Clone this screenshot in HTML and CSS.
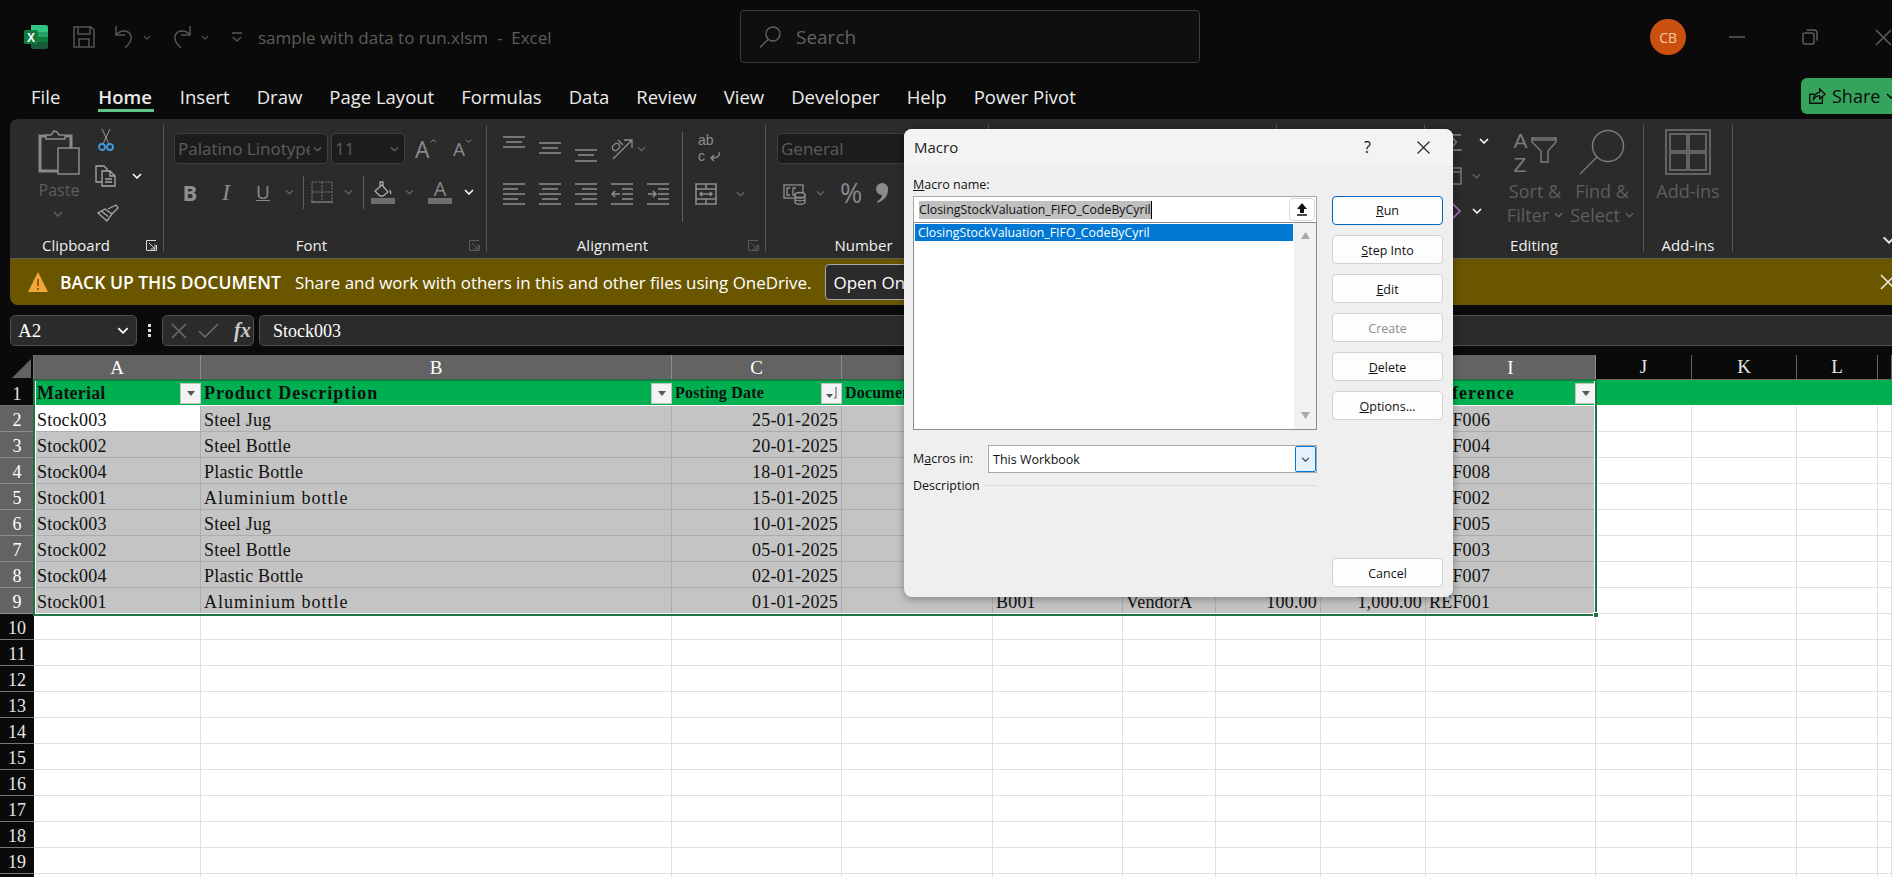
FILE: index.html
```html
<!DOCTYPE html>
<html lang="en">
<head>
    <meta charset="UTF-8">
    <title>sample with data to run.xlsm - Excel</title>
    <link rel="stylesheet" href="styles.css">
</head>
<body>
    <svg class="defs" width="0" height="0">
        <symbol id="chev" viewBox="0 0 10 6"><path d="M1 1l4 4 4-4" fill="none" stroke="currentColor" stroke-width="1.5"/></symbol>
        <symbol id="launcher" viewBox="0 0 11 11"><path d="M.5 10V.5H10M3 3l6 6M9 4.5V9H4.5M.5 10.5h10V5" fill="none" stroke="currentColor"/></symbol>
        <symbol id="tri" viewBox="0 0 8 5"><path d="M0 0h8L4 5z" fill="currentColor"/></symbol>
    </svg>

    <!-- title bar -->
    <header class="titlebar">
        <svg class="logo" width="24" height="24" viewBox="0 0 24 24">
            <path d="M7 0h15a2 2 0 0 1 2 2v5H7z" fill="#33c481"/>
            <path d="M7 7h17v5H7z" fill="#21a366"/>
            <path d="M7 12h17v5H7z" fill="#107c41"/>
            <path d="M7 17h17v5a2 2 0 0 1-2 2H9a2 2 0 0 1-2-2z" fill="#185c37"/>
            <rect x="0" y="5" width="14" height="14" rx="1.5" fill="#107c41"/>
            <text x="7" y="16.5" text-anchor="middle" font-family="Liberation Sans" font-weight="700" font-size="12" fill="#fff">X</text>
        </svg>
        <svg class="qat save" width="22" height="22" viewBox="0 0 22 22" fill="none" stroke="currentColor" stroke-width="1.5">
            <path d="M1 1h17l3 3v17H1zM5 1v7h12V1M6 21v-8h10v8"/>
        </svg>
        <svg class="qat undo" width="22" height="24" viewBox="0 0 22 24" fill="none" stroke="currentColor" stroke-width="1.5">
            <path d="M3 1v9h9M3 10c5-6 13-5 15 1 1 5-2 8-6 12"/>
        </svg>
        <svg class="qat chev-small" width="8" height="5"><use href="#chev"/></svg>
        <svg class="qat redo" width="22" height="24" viewBox="0 0 22 24" fill="none" stroke="currentColor" stroke-width="1.5">
            <path d="M19 1v9h-9M19 10c-5-6-13-5-15 1-1 5 2 8 6 12"/>
        </svg>
        <svg class="qat chev-small" width="8" height="5"><use href="#chev"/></svg>
        <svg class="qat customize" width="10" height="10" viewBox="0 0 10 10" fill="none" stroke="currentColor" stroke-width="1.4">
            <path d="M0 1h10M1 5l4 4 4-4"/>
        </svg>
        <div class="doc-title">sample with data to run.xlsm&nbsp; - &nbsp;Excel</div>
        <div class="search">
            <svg width="22" height="22" viewBox="0 0 22 22" fill="none" stroke="currentColor" stroke-width="1.4">
                <circle cx="14" cy="8" r="7"/><path d="M9 13.5L1 21.5"/>
            </svg>
            <span>Search</span>
        </div>
        <div class="avatar">CB</div>
        <svg class="win win-min" width="16" height="2"><path d="M0 1h16" stroke="currentColor" stroke-width="1.5"/></svg>
        <svg class="win win-max" width="16" height="16" viewBox="0 0 16 16" fill="none" stroke="currentColor" stroke-width="1.5">
            <rect x="1" y="4" width="11" height="11" rx="2"/><path d="M4.5 1H12a3 3 0 0 1 3 3v7.5"/>
        </svg>
        <svg class="win win-close" width="17" height="17" viewBox="0 0 17 17" stroke="currentColor" stroke-width="1.5"><path d="M1 1l15 15M16 1L1 16"/></svg>
    </header>

    <!-- tabs -->
    <nav class="tabs">
        <a class="tab tab-file">File</a>
        <a class="tab tab-active">Home</a>
        <a class="tab">Insert</a>
        <a class="tab">Draw</a>
        <a class="tab">Page Layout</a>
        <a class="tab">Formulas</a>
        <a class="tab">Data</a>
        <a class="tab">Review</a>
        <a class="tab">View</a>
        <a class="tab">Developer</a>
        <a class="tab">Help</a>
        <a class="tab">Power Pivot</a>
        <button class="share">
            <svg width="18" height="18" viewBox="0 0 20 20" fill="none" stroke="currentColor" stroke-width="1.5">
                <path d="M16 11v7H2V8h5M6 14c0-5 4-8 7-8V2l6 6-6 5V9.5c-3 0-5 1.5-7 4.5z"/>
            </svg>
            <span>Share</span>
            <svg width="10" height="6"><use href="#chev"/></svg>
        </button>
    </nav>

    <!-- ribbon -->
    <section class="ribbon-wrap">
        <div class="ribbon">
            <div class="group group-clipboard">
                <div class="group-body clip-body">
                    <div class="paste">
                        <svg width="42" height="45" viewBox="0 0 42 45" fill="none" stroke="#8a8a8a">
                            <path d="M10 6H2v35h20" stroke-width="3"/>
                            <path d="M8 9V5h5l3-4 3 1 2 3h6v4z" stroke-width="1.5" fill="#2b2b2b"/>
                            <path d="M28 6h5v12" stroke-width="3"/>
                            <rect x="20" y="18" width="21" height="26" stroke-width="1.5" fill="#2b2b2b"/>
                        </svg>
                        <span class="dim-label">Paste</span>
                        <svg class="chev" width="10" height="6"><use href="#chev"/></svg>
                    </div>
                    <div class="clip-tools">
                        <svg width="16" height="22" viewBox="0 0 16 22" fill="none">
                            <path d="M4 0l7 15M12 0L5 15" stroke="#9a9a9a"/>
                            <circle cx="4" cy="18" r="3" stroke="#3f9ade" stroke-width="1.8"/><circle cx="12" cy="18" r="3" stroke="#3f9ade" stroke-width="1.8"/>
                        </svg>
                        <div class="copy-row">
                            <svg width="22" height="22" viewBox="0 0 22 22" fill="none" stroke="#a8a8a8" stroke-width="1.3">
                                <path d="M7 17H1V1h8l3 3v2M7 6h8l5 5v10H7zM15 6v5h5M10 14h7M10 17h7"/>
                            </svg>
                            <svg class="chev-on" width="10" height="6"><use href="#chev"/></svg>
                        </div>
                        <svg class="brush" width="22" height="19" viewBox="0 0 22 19" fill="none" stroke="#a8a8a8" stroke-width="1.3">
                            <path d="M1 10l9 8 5-7-7-5zM5 8.5l6 5M15 11l6-6-2-3-8 4"/>
                        </svg>
                    </div>
                </div>
                <div class="group-label"><span>Clipboard</span><svg class="launcher-on" width="11" height="11"><use href="#launcher"/></svg></div>
            </div>

            <div class="group group-font">
                <div class="group-body font-body">
                    <div class="font-row">
                        <div class="combo combo-name"><span class="combo-text">Palatino Linotype</span><svg class="chev" width="9" height="6"><use href="#chev"/></svg></div>
                        <div class="combo combo-size"><span class="combo-text">11</span><svg class="chev" width="9" height="6"><use href="#chev"/></svg></div>
                        <span class="grow-a">A<svg width="7" height="4"><use href="#chev" transform="matrix(1 0 0 -1 0 4)"/></svg></span>
                        <span class="grow-a small-a">A<svg width="7" height="4"><use href="#chev"/></svg></span>
                    </div>
                    <div class="format-row">
                        <b class="fmt fmt-b">B</b>
                        <i class="fmt fmt-i">I</i>
                        <u class="fmt fmt-u">U</u>
                        <svg class="chev" width="9" height="6"><use href="#chev"/></svg>
                        <span class="vsep"></span>
                        <svg width="22" height="22" viewBox="0 0 22 22" fill="none" stroke="#7d7d7d">
                            <path d="M1 20V1h20v19M1 11h20M11 1v19" stroke-dasharray="2 1.2"/><path d="M0 21h22" stroke-width="1.5"/>
                        </svg>
                        <svg class="chev" width="9" height="6"><use href="#chev"/></svg>
                        <span class="vsep"></span>
                        <svg width="24" height="23" viewBox="0 0 24 23" fill="none" stroke="#a8a8a8" stroke-width="1.3">
                            <path d="M4 10l7-6 6 7-5 4h-3zM9 6V1h3v5M19 9l1 4"/><rect x="0" y="17" width="24" height="6" fill="#6e6e6e" stroke="none"/>
                        </svg>
                        <svg class="chev" width="9" height="6"><use href="#chev"/></svg>
                        <span class="font-color"><span>A</span></span>
                        <svg class="chev-on" width="10" height="6"><use href="#chev"/></svg>
                    </div>
                </div>
                <div class="group-label"><span>Font</span><svg class="launcher" width="11" height="11"><use href="#launcher"/></svg></div>
            </div>

            <div class="group group-align">
                <div class="group-body align-body">
                    <div class="align-grid">
                        <svg width="22" height="26" viewBox="0 0 22 26" stroke="#8e8e8e" stroke-width="1.5"><path d="M0 1h22M3 6h16M0 11h22"/></svg>
                        <svg width="22" height="26" viewBox="0 0 22 26" stroke="#8e8e8e" stroke-width="1.5"><path d="M0 7h22M3 12h16M0 17h22"/></svg>
                        <svg width="22" height="26" viewBox="0 0 22 26" stroke="#8e8e8e" stroke-width="1.5"><path d="M0 14h22M3 19h16M0 25h22"/></svg>
                        <svg width="24" height="24" viewBox="0 0 24 24" fill="none" stroke="#8e8e8e" stroke-width="1.3"><path d="M3 22L22 3M14 3h8v8M4 8a3 3 0 1 0 4 4 3 3 0 1 0-4-4zM8 3l5 5"/></svg>
                        <svg class="chev" width="9" height="6"><use href="#chev"/></svg>
                        <svg width="22" height="22" viewBox="0 0 22 22" stroke="#8e8e8e" stroke-width="1.5"><path d="M0 1h22M0 6h15M0 11h22M0 16h15M0 21h22"/></svg>
                        <svg width="22" height="22" viewBox="0 0 22 22" stroke="#8e8e8e" stroke-width="1.5"><path d="M0 1h22M3 6h16M0 11h22M3 16h16M0 21h22"/></svg>
                        <svg width="22" height="22" viewBox="0 0 22 22" stroke="#8e8e8e" stroke-width="1.5"><path d="M0 1h22M7 6h15M0 11h22M7 16h15M0 21h22"/></svg>
                        <svg width="22" height="22" viewBox="0 0 22 22" fill="none" stroke="#8e8e8e" stroke-width="1.5"><path d="M0 1h22M11 6h11M11 11h11M11 16h11M0 21h22M9 11H1M4 8l-3 3 3 3"/></svg>
                        <svg width="22" height="22" viewBox="0 0 22 22" fill="none" stroke="#8e8e8e" stroke-width="1.5"><path d="M0 1h22M11 6h11M11 11h11M11 16h11M0 21h22M1 11h8M6 8l3 3-3 3"/></svg>
                    </div>
                    <span class="vsep vsep-tall"></span>
                    <div class="align-side">
                        <div class="wrap-text"><span>ab</span><span>c</span><svg width="11" height="10" viewBox="0 0 11 10" fill="none" stroke="#8e8e8e" stroke-width="1.3"><path d="M10 0c1 4-1 6-8 6M5 3L2 6l3 3"/></svg></div>
                        <div class="merge-row">
                            <svg width="22" height="22" viewBox="0 0 22 22" fill="none" stroke="#8e8e8e" stroke-width="1.5"><rect x="1" y="1" width="20" height="20"/><path d="M1 6h20M1 16h20M5 11h12M7 9l-2 2 2 2M15 9l2 2-2 2M11 1v5M11 16v5"/></svg>
                            <svg class="chev" width="9" height="6"><use href="#chev"/></svg>
                        </div>
                    </div>
                </div>
                <div class="group-label"><span>Alignment</span><svg class="launcher" width="11" height="11"><use href="#launcher"/></svg></div>
            </div>

            <div class="group group-number">
                <div class="group-body number-body">
                    <div class="combo combo-number"><span class="combo-text">General</span></div>
                    <div class="number-row">
                        <svg width="23" height="23" viewBox="0 0 23 23" fill="none" stroke="#8e8e8e" stroke-width="1.3"><rect x="1" y="3" width="19" height="13"/><path d="M7 6H4v7h3M13 6h-3v7h3"/><ellipse cx="17" cy="13" rx="5" ry="2.5" fill="#2b2b2b"/><path d="M12 13v7c0 3 10 3 10 0v-7M12 17c0 2.5 10 2.5 10 0"/></svg>
                        <svg class="chev" width="9" height="6"><use href="#chev"/></svg>
                        <span class="percent">%</span>
                        <svg class="comma" width="12" height="20" viewBox="0 0 12 20"><path d="M6 0a6 6 0 0 1 6 7c0 6-4 10-10 13l-1-1.5c3-2 5-4 5-6.500A6 6 0 0 1 6 0z" fill="#8a8a8a"/></svg>
                    </div>
                </div>
                <div class="group-label"><span>Number</span><svg class="launcher" width="11" height="11"><use href="#launcher"/></svg></div>
            </div>

            <div class="group group-styles"></div>
            <div class="group group-cells"></div>

            <div class="group group-editing">
                <div class="group-body editing-body">
                    <div class="edit-tools">
                        <div class="edit-row edit-sum"><span class="sigma">Σ</span><svg class="chev-on" width="10" height="6"><use href="#chev"/></svg></div>
                        <div class="edit-row"><svg width="22" height="18" viewBox="0 0 22 18" fill="none" stroke="#7a7a7a" stroke-width="1.5"><rect x="1" y="1" width="20" height="16"/><path d="M1 5h20"/></svg><svg class="chev" width="9" height="6"><use href="#chev"/></svg></div>
                        <div class="edit-row"><svg width="22" height="20" viewBox="0 0 22 20" fill="none" stroke="#b070c8" stroke-width="1.5"><path d="M2 10l9-9 9 9-9 9z"/></svg><svg class="chev-on" width="10" height="6"><use href="#chev"/></svg></div>
                    </div>
                    <div class="big-btn big-sort">
                        <div class="sort-ico">
                            <span class="az"><span>A</span><span>Z</span></span>
                            <svg width="26" height="26" viewBox="0 0 26 26" fill="none" stroke="#7a7a7a" stroke-width="1.5"><path d="M1 1h24v4l-8 9v11h-7V14L1 5z"/><path d="M1 3h24"/></svg>
                        </div>
                        <span class="dim-label">Sort &amp;</span>
                        <span class="dim-label">Filter <svg class="chev" width="9" height="6"><use href="#chev"/></svg></span>
                    </div>
                    <div class="big-btn big-find">
                        <svg width="46" height="46" viewBox="0 0 46 46" fill="none" stroke="#7a7a7a" stroke-width="1.5"><circle cx="29" cy="17" r="15.5"/><path d="M18 28L1 45"/></svg>
                        <span class="dim-label">Find &amp;</span>
                        <span class="dim-label">Select <svg class="chev" width="9" height="6"><use href="#chev"/></svg></span>
                    </div>
                </div>
                <div class="group-label group-label-center"><span>Editing</span></div>
            </div>

            <div class="group group-addins">
                <div class="group-body big-btn addins-body">
                    <svg width="46" height="46" viewBox="0 0 46 46" fill="none" stroke="#636363" stroke-width="2"><rect x="1" y="1" width="44" height="44"/><rect x="5" y="5" width="17" height="17"/><rect x="24" y="5" width="17" height="17"/><rect x="5" y="24" width="17" height="17"/><rect x="24" y="24" width="17" height="17"/></svg>
                    <span class="dim-label">Add-ins</span>
                </div>
                <div class="group-label group-label-center"><span>Add-ins</span></div>
            </div>

            <svg class="collapse" width="14" height="8"><use href="#chev"/></svg>
        </div>

        <div class="warning">
            <svg width="22" height="22" viewBox="0 0 22 22"><path d="M11 1l10 20H1z" fill="#f2a63a"/><path d="M11 8v7M11 17v2" stroke="#6b4a10" stroke-width="1.5"/></svg>
            <b class="warning-title">BACK UP THIS DOCUMENT</b>
            <span class="warning-msg">Share and work with others in this and other files using OneDrive.</span>
            <button class="warning-btn">Open OneDrive</button>
            <svg class="warning-close" width="16" height="16" viewBox="0 0 16 16" stroke="currentColor" stroke-width="1.5"><path d="M1 1l14 14M15 1L1 15"/></svg>
        </div>
    </section>

    <!-- formula bar -->
    <div class="formula-bar">
        <div class="name-box"><span>A2</span><svg width="12" height="7"><use href="#chev"/></svg></div>
        <div class="fb-dots"><i></i><i></i><i></i></div>
        <div class="fb-actions">
            <svg width="16" height="16" viewBox="0 0 16 16" stroke="#6e6e6e" stroke-width="1.5"><path d="M1 1l14 14M15 1L1 15"/></svg>
            <svg width="21" height="15" viewBox="0 0 21 15" fill="none" stroke="#6e6e6e" stroke-width="1.5"><path d="M1 8l6 6L20 1"/></svg>
            <span class="fx">fx</span>
        </div>
        <div class="fb-input">Stock003</div>
    </div>

    <!-- sheet -->
    <div class="sheet">
        <table class="grid">
            <colgroup>
                <col class="c-rh"><col class="c-a"><col class="c-b"><col class="c-c"><col class="c-d"><col class="c-e"><col class="c-f"><col class="c-g"><col class="c-h"><col class="c-i"><col class="c-j"><col class="c-k"><col class="c-l"><col class="c-m">
            </colgroup>
            <thead>
                <tr>
                    <th class="corner"><svg width="19" height="19"><path d="M19 0v19H0z" fill="#636363"/></svg></th>
                    <th class="ch on">A</th><th class="ch on">B</th><th class="ch on">C</th><th class="ch on">D</th><th class="ch on">E</th><th class="ch on">F</th><th class="ch on">G</th><th class="ch on">H</th><th class="ch on">I</th>
                    <th class="ch">J</th><th class="ch">K</th><th class="ch">L</th><th class="ch"></th>
                </tr>
            </thead>
            <tbody>
                <tr class="head-row">
                    <th class="rh">1</th>
                    <td><div class="hcell"><span>Material</span><span class="filter"><svg width="8" height="5"><use href="#tri"/></svg></span></div></td>
                    <td><div class="hcell"><span class="wide">Product Description</span><span class="filter"><svg width="8" height="5"><use href="#tri"/></svg></span></div></td>
                    <td><div class="hcell small"><span>Posting Date</span><span class="filter"><svg width="14" height="14" viewBox="0 0 14 14"><path d="M1 8h7l-3.5 4z" fill="#555"/><path d="M11 1v11M9 12h2" stroke="#555" fill="none"/></svg></span></div></td>
                    <td><div class="hcell small"><span>Document</span></div></td>
                    <td></td><td></td><td></td><td></td>
                    <td><div class="hcell"><span class="wide">Reference</span><span class="filter"><svg width="8" height="5"><use href="#tri"/></svg></span></div></td>
                    <td></td><td></td><td></td><td></td>
                </tr>
                <tr class="sel"><th class="rh on">2</th><td class="active">Stock003</td><td>Steel Jug</td><td class="num">25-01-2025</td><td></td><td></td><td></td><td></td><td></td><td>REF006</td><td class="plain"></td><td class="plain"></td><td class="plain"></td><td class="plain"></td></tr>
                <tr class="sel"><th class="rh on">3</th><td>Stock002</td><td>Steel Bottle</td><td class="num">20-01-2025</td><td></td><td></td><td></td><td></td><td></td><td>REF004</td><td class="plain"></td><td class="plain"></td><td class="plain"></td><td class="plain"></td></tr>
                <tr class="sel"><th class="rh on">4</th><td>Stock004</td><td>Plastic Bottle</td><td class="num">18-01-2025</td><td></td><td></td><td></td><td></td><td></td><td>REF008</td><td class="plain"></td><td class="plain"></td><td class="plain"></td><td class="plain"></td></tr>
                <tr class="sel"><th class="rh on">5</th><td>Stock001</td><td><span class="wide">Aluminium bottle</span></td><td class="num">15-01-2025</td><td></td><td></td><td></td><td></td><td></td><td>REF002</td><td class="plain"></td><td class="plain"></td><td class="plain"></td><td class="plain"></td></tr>
                <tr class="sel"><th class="rh on">6</th><td>Stock003</td><td>Steel Jug</td><td class="num">10-01-2025</td><td></td><td></td><td></td><td></td><td></td><td>REF005</td><td class="plain"></td><td class="plain"></td><td class="plain"></td><td class="plain"></td></tr>
                <tr class="sel"><th class="rh on">7</th><td>Stock002</td><td>Steel Bottle</td><td class="num">05-01-2025</td><td></td><td></td><td></td><td></td><td></td><td>REF003</td><td class="plain"></td><td class="plain"></td><td class="plain"></td><td class="plain"></td></tr>
                <tr class="sel"><th class="rh on">8</th><td>Stock004</td><td>Plastic Bottle</td><td class="num">02-01-2025</td><td></td><td></td><td></td><td></td><td></td><td>REF007</td><td class="plain"></td><td class="plain"></td><td class="plain"></td><td class="plain"></td></tr>
                <tr class="sel"><th class="rh on">9</th><td>Stock001</td><td><span class="wide">Aluminium bottle</span></td><td class="num">01-01-2025</td><td></td><td>B001</td><td>VendorA</td><td class="num">100.00</td><td class="num">1,000.00</td><td>REF001</td><td class="plain"></td><td class="plain"></td><td class="plain"></td><td class="plain"></td></tr>
                <tr><th class="rh">10</th><td></td><td></td><td></td><td></td><td></td><td></td><td></td><td></td><td></td><td></td><td></td><td></td><td></td></tr>
                <tr><th class="rh">11</th><td></td><td></td><td></td><td></td><td></td><td></td><td></td><td></td><td></td><td></td><td></td><td></td><td></td></tr>
                <tr><th class="rh">12</th><td></td><td></td><td></td><td></td><td></td><td></td><td></td><td></td><td></td><td></td><td></td><td></td><td></td></tr>
                <tr><th class="rh">13</th><td></td><td></td><td></td><td></td><td></td><td></td><td></td><td></td><td></td><td></td><td></td><td></td><td></td></tr>
                <tr><th class="rh">14</th><td></td><td></td><td></td><td></td><td></td><td></td><td></td><td></td><td></td><td></td><td></td><td></td><td></td></tr>
                <tr><th class="rh">15</th><td></td><td></td><td></td><td></td><td></td><td></td><td></td><td></td><td></td><td></td><td></td><td></td><td></td></tr>
                <tr><th class="rh">16</th><td></td><td></td><td></td><td></td><td></td><td></td><td></td><td></td><td></td><td></td><td></td><td></td><td></td></tr>
                <tr><th class="rh">17</th><td></td><td></td><td></td><td></td><td></td><td></td><td></td><td></td><td></td><td></td><td></td><td></td><td></td></tr>
                <tr><th class="rh">18</th><td></td><td></td><td></td><td></td><td></td><td></td><td></td><td></td><td></td><td></td><td></td><td></td><td></td></tr>
                <tr><th class="rh">19</th><td></td><td></td><td></td><td></td><td></td><td></td><td></td><td></td><td></td><td></td><td></td><td></td><td></td></tr>
                <tr class="last-row"><th class="rh"></th><td></td><td></td><td></td><td></td><td></td><td></td><td></td><td></td><td></td><td></td><td></td><td></td><td></td></tr>
            </tbody>
        </table>
        <div class="selection"><span class="handle"></span></div>
    </div>

    <!-- macro dialog -->
    <div class="dialog">
        <div class="dlg-title">
            <span class="dlg-name">Macro</span>
            <span class="dlg-help">?</span>
            <svg width="13" height="13" viewBox="0 0 13 13" stroke="#222" stroke-width="1.1"><path d="M.5.5l12 12M12.5.5l-12 12"/></svg>
        </div>
        <div class="dlg-body">
            <div class="dlg-left">
                <label class="dlg-label"><u>M</u>acro name:</label>
                <div class="macro-input">
                    <span class="macro-value">ClosingStockValuation_FIFO_CodeByCyril</span><span class="caret"></span>
                    <span class="collapse-btn">
                        <svg width="10" height="13" viewBox="0 0 10 13"><path d="M5 0l5 6H7v4H3V6H0z" fill="#111"/><path d="M0 12h10" stroke="#111" stroke-width="1.5"/></svg>
                    </span>
                </div>
                <div class="macro-list">
                    <div class="macro-items"><div class="macro-item">ClosingStockValuation_FIFO_CodeByCyril</div></div>
                    <div class="scrollbar">
                        <svg width="9" height="7" viewBox="0 0 9 7"><path d="M4.5 0L9 7H0z" fill="#a8a8a8"/></svg>
                        <svg width="9" height="7" viewBox="0 0 9 7"><path d="M0 0h9L4.5 7z" fill="#a8a8a8"/></svg>
                    </div>
                </div>
                <div class="macros-in">
                    <label class="dlg-label">M<u>a</u>cros in:</label>
                    <div class="dlg-select"><span>This Workbook</span><span class="dlg-drop"><svg width="9" height="5"><use href="#chev"/></svg></span></div>
                </div>
                <div class="desc-row"><span class="dlg-label">Description</span><span class="desc-line"></span></div>
            </div>
            <div class="dlg-right">
                <button class="dlg-btn dlg-primary"><u>R</u>un</button>
                <button class="dlg-btn"><u>S</u>tep Into</button>
                <button class="dlg-btn"><u>E</u>dit</button>
                <button class="dlg-btn dlg-disabled">Create</button>
                <button class="dlg-btn"><u>D</u>elete</button>
                <button class="dlg-btn"><u>O</u>ptions...</button>
                <button class="dlg-btn dlg-cancel">Cancel</button>
            </div>
        </div>
    </div>
</body>
</html>
```

FILE: styles.css
```css
* {
    box-sizing: border-box;
}
html, body {
    margin: 0;
    width: 1892px;
    height: 877px;
    overflow: hidden;
}
body {
    position: relative;
    background: #0a0a0a;
    color: #e6e6e6;
    font-family: "Open Sans", "Noto Sans", sans-serif;
}
svg {
    flex: none;
    display: block;
}
.defs {
    position: absolute;
}
button {
    font-family: inherit;
}

/* title bar */
.titlebar {
    height: 72px;
    display: flex;
    align-items: center;
    padding-left: 24px;
    padding-top: 2px;
}
.qat {
    color: #555;
}
.save { margin-left: 25px; }
.undo { margin-left: 18px; }
.chev-small { margin-left: 8px; }
.redo { margin-left: 20px; }
.customize { margin-left: 23px; }
.doc-title {
    margin-left: 16px;
    width: 486px;
    color: #5c5c5c;
    font-size: 17px;
    white-space: nowrap;
}
.search {
    width: 464px;
    height: 53px;
    margin-top: -1px;
    display: flex;
    align-items: center;
    gap: 15px;
    padding-left: 18px;
    background: #0f0f0f;
    border: 1px solid #3c3c3c;
    border-radius: 4px;
    color: #626262;
    font-size: 19px;
}
.avatar {
    margin-left: 450px;
    width: 36px;
    height: 36px;
    border-radius: 50%;
    background: #ca5010;
    color: #f5c9a6;
    font-size: 14px;
    display: flex;
    align-items: center;
    justify-content: center;
}
.win {
    color: #5e5e5e;
}
.win-min { margin-left: 43px; }
.win-max { margin-left: 57px; }
.win-close { margin-left: 57px; }

/* tabs */
.tabs {
    height: 47px;
    display: flex;
    align-items: center;
    gap: 27px;
    padding-left: 31px;
    padding-top: 2px;
    font-size: 18.5px;
    position: relative;
}
.tab {
    color: #ececec;
    white-space: nowrap;
}
.tab-file { margin-right: 11px; }
.tab-active {
    position: relative;
    font-weight: 600;
    margin-right: 1px;
}
.tab-active::after {
    content: "";
    position: absolute;
    left: 0;
    right: -2px;
    bottom: -3px;
    height: 3px;
    background: #5fc38a;
}
.share {
    margin-left: auto;
    width: 91px;
    height: 36px;
    margin-top: -1px;
    display: flex;
    align-items: center;
    gap: 6px;
    padding: 0 0 0 7px;
    border: 0;
    border-radius: 6px 0 0 6px;
    background: #36a35d;
    color: #0b0b0b;
    font-size: 18px;
    overflow: hidden;
}

/* ribbon */
.ribbon-wrap {
    margin-left: 10px;
    border-radius: 8px 0 0 8px;
    overflow: hidden;
}
.ribbon {
    height: 140px;
    display: flex;
    position: relative;
    background: #2b2b2b;
    border-bottom: 1px solid #5e5e5e;
    padding-top: 6px;
}
.group {
    height: 127px;
    display: flex;
    flex-direction: column;
    border-right: 1px solid #555;
    flex: none;
}
.group-clipboard { width: 154px; }
.group-font { width: 323px; }
.group-align { width: 279px; }
.group-number { width: 223px; }
.group-styles { width: 288px; }
.group-cells { width: 148px; }
.group-editing { width: 219px; }
.group-addins { width: 89px; }
.group-body {
    flex: 1;
    display: flex;
}
.group-label {
    height: 20px;
    margin-bottom: -3px;
    display: flex;
    align-items: center;
    color: #f0f0f0;
    font-size: 15px;
    flex: none;
}
.group-label span {
    flex: 1;
    text-align: center;
}
.group-label svg {
    margin-right: 6px;
    margin-left: 10px;
}
.group-clipboard .group-label {
    padding-left: 6px;
}
.launcher {
    color: #5a5a5a;
}
.launcher-on {
    color: #d8d8d8;
}
.chev {
    color: #626262;
}
.chev-on {
    color: #fff;
}
.dim-label {
    color: #5e5e5e;
    font-size: 16px;
    line-height: 24px;
    white-space: nowrap;
    display: flex;
    align-items: center;
    gap: 5px;
}

/* clipboard */
.clip-body {
    padding-left: 28px;
}
.paste {
    width: 42px;
    padding-top: 5px;
    display: flex;
    flex-direction: column;
    align-items: center;
}
.paste .dim-label {
    margin-top: 3px;
}
.paste .chev {
    margin-top: 9px;
    margin-right: 3px;
}
.clip-tools {
    margin-left: 15px;
    padding-top: 4px;
    display: flex;
    flex-direction: column;
    align-items: flex-start;
}
.clip-tools > svg:first-child {
    margin-left: 3px;
}
.copy-row {
    margin-top: 14px;
    display: flex;
    align-items: center;
    gap: 15px;
}
.brush {
    margin-top: 16px;
    margin-left: 2px;
}

/* font */
.font-body {
    flex-direction: column;
    padding-left: 10px;
    padding-top: 8px;
}
.font-row {
    display: flex;
    align-items: center;
}
.combo {
    height: 31px;
    display: flex;
    align-items: center;
    justify-content: space-between;
    padding: 0 5px 0 3px;
    background: #1c1c1c;
    border: 1px solid #3e3e3e;
    border-radius: 5px;
}
.combo-text {
    color: #5c5c5c;
    font-size: 17px;
    white-space: nowrap;
    overflow: hidden;
}
.combo-name {
    width: 154px;
}
.combo-name .combo-text {
    width: 132px;
}
.combo-size {
    width: 74px;
    margin-left: 3px;
}
.grow-a {
    margin-left: 10px;
    display: flex;
    color: #8a8a8a;
    font-size: 23px;
    line-height: 24px;
    width: 24px;
}
.grow-a svg {
    color: #8a8a8a;
    margin-top: 2px;
}
.small-a {
    margin-left: 14px;
    font-size: 19px;
}
.format-row {
    margin-top: 11px;
    margin-left: -2px;
    display: grid;
    grid-template-columns: 36px 36px 38px 14px 14px 24px 28px 2px 38px 14px 48px 10px;
    align-items: center;
    justify-items: center;
    height: 34px;
}
.fmt {
    color: #8a8a8a;
    font-size: 21px;
}
.fmt-b {
    color: #8f8f8f;
    font-size: 22px;
}
.fmt-i {
    font-family: "Liberation Serif", serif;
    font-size: 24px;
}
.fmt-u {
    font-size: 19px;
}
.vsep {
    width: 1px;
    height: 33px;
    background: #5e5e5e;
}
.font-color {
    width: 24px;
    height: 24px;
    border-bottom: 6px solid #6e6e6e;
    color: #8a8a8a;
    font-size: 20px;
    line-height: 18px;
    text-align: center;
}

/* alignment */
.align-body {
    padding-left: 9px;
}
.align-grid {
    width: 180px;
    height: 90px;
    display: grid;
    grid-template-columns: repeat(5, 36px);
    grid-template-rows: 48px 42px;
    justify-items: center;
    align-items: center;
}
.align-grid .chev {
    justify-self: start;
    margin-left: -3px;
}
.vsep-tall {
    height: 90px;
    margin: 7px 0 0 6px;
}
.align-side {
    display: flex;
    flex-direction: column;
    padding-left: 12px;
    padding-top: 7px;
}
.wrap-text {
    width: 22px;
    height: 34px;
    margin-left: 3px;
    position: relative;
    color: #8e8e8e;
    font-family: "Liberation Sans", sans-serif;
    font-size: 14px;
    line-height: 16px;
    display: flex;
    flex-direction: column;
}
.wrap-text svg {
    position: absolute;
    right: 0;
    bottom: 4px;
}
.merge-row {
    margin-top: 17px;
    display: flex;
    align-items: center;
    gap: 19px;
}

/* number */
.number-body {
    flex-direction: column;
    padding-left: 11px;
    padding-top: 8px;
}
.combo-number {
    width: 240px;
}
.number-row {
    margin-top: 14px;
    margin-left: 6px;
    display: flex;
    align-items: center;
}
.number-row .chev {
    margin-left: 10px;
}
.percent {
    margin-left: 15px;
    color: #8a8a8a;
    font-size: 27px;
    line-height: 30px;
}
.comma {
    margin-left: 14px;
}

/* editing */
.editing-body {
    padding-left: 8px;
}
.edit-tools {
    width: 60px;
    padding-top: 6px;
    display: flex;
    flex-direction: column;
    gap: 15px;
}
.edit-row {
    height: 20px;
    display: flex;
    align-items: center;
    gap: 10px;
    padding-left: 7px;
}
.edit-sum {
    gap: 17px;
}
.sigma {
    width: 22px;
    text-align: right;
    color: #7a7a7a;
    font-size: 24px;
}
.big-btn {
    display: flex;
    flex-direction: column;
    align-items: center;
}
.big-sort {
    width: 84px;
    padding-top: 4px;
}
.big-find {
    width: 50px;
    padding-top: 4px;
}
.sort-ico {
    height: 46px;
    display: flex;
    gap: 0;
    color: #7a7a7a;
}
.sort-ico svg {
    margin-top: 8px;
    margin-left: -2px;
}
.az {
    display: flex;
    flex-direction: column;
    font-family: "Liberation Sans", sans-serif;
    font-size: 21px;
    line-height: 24px;
    width: 19px;
}
.big-sort .dim-label, .big-find .dim-label {
    font-size: 18px;
}
.big-sort .dim-label:nth-child(2), .big-find .dim-label:nth-child(2) {
    margin-top: 4px;
}

/* add-ins */
.addins-body {
    padding-top: 4px;
}
.addins-body .dim-label {
    margin-top: 4px;
    font-size: 18px;
}
.collapse {
    position: absolute;
    right: -4px;
    bottom: 14px;
    color: #e6e6e6;
}

/* warning bar */
.warning {
    height: 46px;
    display: flex;
    align-items: center;
    padding-left: 17px;
    background: #6b5600;
    color: #fff;
    position: relative;
}
.warning-title {
    margin-left: 11px;
    font-size: 17.5px;
    font-weight: 600;
    white-space: nowrap;
}
.warning-msg {
    margin-left: 14px;
    font-size: 16.9px;
    white-space: nowrap;
}
.warning-btn {
    margin-left: 14px;
    height: 36px;
    width: 200px;
    padding: 0 0 0 7px;
    text-align: left;
    background: #2b2b2b;
    color: #fff;
    border: 1px solid #aaa;
    border-radius: 4px;
    font-size: 17px;
}
.warning-close {
    position: absolute;
    right: -4px;
    top: 15px;
    color: #f0f0f0;
}

/* formula bar */
.formula-bar {
    margin-top: 10px;
    height: 31px;
    display: flex;
    padding-left: 10px;
}
.name-box {
    width: 127px;
    display: flex;
    align-items: center;
    justify-content: space-between;
    padding: 0 7px;
    background: #2b2b2b;
    border: 1px solid #4f4f4f;
    border-radius: 5px;
    font-family: "Liberation Serif", serif;
    font-size: 19px;
    color: #fff;
}
.fb-dots {
    width: 25px;
    display: flex;
    flex-direction: column;
    align-items: center;
    justify-content: center;
    gap: 2px;
}
.fb-dots i {
    width: 3px;
    height: 3px;
    background: #ddd;
}
.fb-actions {
    width: 92px;
    display: flex;
    align-items: center;
    padding-left: 8px;
    background: #2b2b2b;
    border: 1px solid #4f4f4f;
    border-radius: 5px;
    gap: 11px;
}
.fx {
    margin-left: 4px;
    font-family: "Liberation Serif", serif;
    font-style: italic;
    font-weight: 700;
    font-size: 20px;
    color: #ccc;
}
.fb-input {
    margin-left: 5px;
    flex: 1;
    padding-left: 13px;
    background: #2b2b2b;
    border: 1px solid #4f4f4f;
    border-right: 0;
    border-radius: 5px 0 0 5px;
    font-family: "Liberation Serif", serif;
    font-size: 18px;
    line-height: 30px;
    color: #fff;
}

/* sheet */
.sheet {
    margin-top: 9px;
    position: relative;
    width: 1892px;
}
.grid {
    width: 1892px;
    table-layout: fixed;
    border-collapse: separate;
    border-spacing: 0;
    font-family: "Liberation Serif", serif;
    font-size: 18px;
    color: #111;
}
.c-rh { width: 34px; }
.c-a { width: 167px; }
.c-b { width: 471px; }
.c-c { width: 170px; }
.c-d { width: 151px; }
.c-e { width: 130px; }
.c-f { width: 93px; }
.c-g { width: 105px; }
.c-h { width: 105px; }
.c-i { width: 170px; }
.c-j { width: 96px; }
.c-k { width: 105px; }
.c-l { width: 81px; }
.c-m { width: 14px; }
.grid th {
    padding: 0;
    font-weight: 400;
}
.corner {
    height: 25px;
    background: #0a0a0a;
    border-right: 1px solid #777;
    text-align: right;
    vertical-align: bottom;
}
.corner svg {
    margin: 0 2px 2px auto;
}
.ch {
    height: 25px;
    background: #0a0a0a;
    color: #e6e6e6;
    font-size: 19px;
    border-right: 1px solid #666;
    border-bottom: 1px solid #666;
}
.ch.on {
    background: #636363;
    color: #fff;
    border-right-color: #8c8c8c;
    border-bottom: 0;
}
.grid .rh {
    height: 26px;
    padding-top: 3px;
    background: #0a0a0a;
    color: #e6e6e6;
    font-size: 18px;
    border-bottom: 1px solid #777;
}
.grid .rh.on {
    background: #636363;
    color: #fff;
    border-bottom-color: #8c8c8c;
}
.grid td {
    height: 26px;
    padding: 3px 3px 0 3px;
    background: #fff;
    border-right: 1px solid #e0e0e0;
    border-bottom: 1px solid #e0e0e0;
    white-space: nowrap;
    overflow: hidden;
}
.sel td {
    background: #c4c4c4;
    border-color: #adadad;
    letter-spacing: .2px;
}
.sel td.active {
    background: #fff;
}
.sel td.plain {
    background: #fff;
    border-color: #e0e0e0;
}
.grid td.num {
    text-align: right;
}
.grid .head-row td {
    background: #00b050;
    border-right: 0;
    border-bottom: 1px solid #fff;
    padding: 0 0 0 3px;
    font-weight: 700;
    letter-spacing: .2px;
}
.wide {
    letter-spacing: 1px;
}
.hcell {
    display: flex;
    align-items: center;
    justify-content: space-between;
    height: 25px;
    padding-top: 1px;
}
.hcell.small {
    font-size: 16px;
}
.filter {
    width: 21px;
    height: 21px;
    display: flex;
    align-items: center;
    justify-content: center;
    background: #f3f3f3;
    border: 1px solid #c4c4c4;
    color: #555;
}
.selection {
    position: absolute;
    left: 33px;
    top: 24px;
    width: 1564px;
    height: 237px;
    border: 2px solid #217346;
    box-shadow: inset 1px 0 0 #fff, inset 0 -1px 0 #fff, inset -1px 0 0 #fff;
    pointer-events: none;
}
.handle {
    position: absolute;
    right: -4px;
    bottom: -4px;
    width: 6px;
    height: 6px;
    background: #217346;
    border: 1px solid #fff;
}

/* macro dialog */
.dialog {
    position: absolute;
    left: 904px;
    top: 129px;
    width: 549px;
    height: 468px;
    display: flex;
    flex-direction: column;
    background: #efefef;
    border-radius: 8px;
    color: #111;
    font-size: 12.5px;
    box-shadow: 0 2px 8px rgba(0, 0, 0, .35);
}
.dlg-title {
    height: 36px;
    flex: none;
    display: flex;
    align-items: center;
    padding: 0 23px 0 10px;
    background: #f3f3f3;
    border-radius: 8px 8px 0 0;
}
.dlg-name {
    flex: 1;
    font-size: 15px;
    color: #222;
}
.dlg-help {
    margin-right: 46px;
    font-size: 16px;
}
.dlg-body {
    flex: 1;
    display: flex;
    gap: 15px;
    padding: 0 10px 10px 9px;
}
.dlg-left {
    width: 404px;
    flex: none;
}
.dlg-label {
    line-height: 20px;
    white-space: nowrap;
}
.dlg-left > .dlg-label {
    display: block;
    margin-top: 10px;
    margin-bottom: 1px;
}
.macro-input {
    height: 26px;
    display: flex;
    align-items: center;
    padding-left: 5px;
    background: #fff;
    border: 1px solid #a8a8a8;
    border-bottom: 0;
    position: relative;
}
.macro-value {
    background: #c0c0c0;
    font-size: 12.3px;
    line-height: 18px;
    white-space: nowrap;
}
.caret {
    width: 1px;
    height: 18px;
    background: #000;
}
.collapse-btn {
    margin-left: auto;
    margin-right: 1px;
    width: 26px;
    height: 23px;
    display: flex;
    align-items: center;
    justify-content: center;
    background: #fff;
    border: 1px solid #d8d8d8;
    border-radius: 4px;
}
.macro-list {
    height: 208px;
    display: flex;
    background: #fff;
    border: 1px solid #8b8b95;
}
.macro-items {
    flex: 1;
    padding: 1px;
}
.macro-item {
    height: 17px;
    line-height: 18px;
    padding-left: 3px;
    background: #0078d4;
    color: #fff;
    font-size: 12.3px;
}
.scrollbar {
    width: 22px;
    background: #f1f1f1;
    display: flex;
    flex-direction: column;
    align-items: center;
    justify-content: space-between;
    padding: 9px 0 10px;
}
.macros-in {
    margin-top: 15px;
    display: flex;
    align-items: center;
    justify-content: space-between;
}
.dlg-select {
    width: 329px;
    height: 28px;
    display: flex;
    align-items: center;
    justify-content: space-between;
    padding-left: 4px;
    background: #fff;
    border: 1px solid #a8a8a8;
}
.dlg-drop {
    width: 21px;
    height: 26px;
    display: flex;
    align-items: center;
    justify-content: center;
    background: #e5f1fb;
    border: 1px solid #0078d4;
    border-radius: 2px;
    color: #444;
}
.desc-row {
    margin-top: 3px;
    display: flex;
    align-items: center;
    gap: 5px;
}
.desc-line {
    flex: 1;
    height: 1px;
    background: #dadada;
    margin-top: -2px;
}
.dlg-right {
    width: 111px;
    padding-top: 31px;
    display: flex;
    flex-direction: column;
    gap: 10px;
}
.dlg-btn {
    height: 29px;
    flex: none;
    padding: 1px 0 0;
    background: #fdfdfd;
    border: 1px solid #d2d2d2;
    border-radius: 4px;
    color: #111;
    font-size: 12.5px;
}
.dlg-primary {
    border-color: #0067c0;
    padding-top: 0;
}
.dlg-disabled {
    color: #8c8c8c;
}
.dlg-cancel {
    margin-top: auto;
}
```
